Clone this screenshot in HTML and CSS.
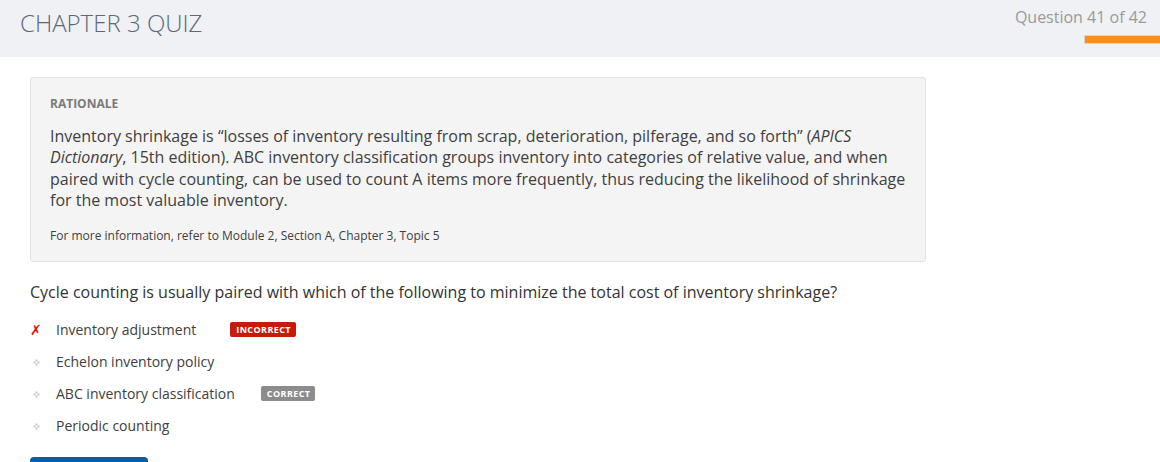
FILE: index.html
```html
<!DOCTYPE html>
<html>
<head>
<meta charset="utf-8">
<link rel="stylesheet" href="styles.css">
</head>
<body>
<header class="topbar">
  <h1 class="title">CHAPTER 3 QUIZ</h1>
  <div class="progress">
    <div class="progress-label">Question 41 of 42</div>
    <div class="progress-bar"></div>
  </div>
</header>
<main class="content">
  <section class="rationale">
    <h2 class="rationale-head">RATIONALE</h2>
    <p class="rationale-text">Inventory shrinkage is “losses of inventory resulting from scrap, deterioration, pilferage, and so forth” (<em>APICS Dictionary</em>, 15th edition). ABC inventory classification groups inventory into categories of relative value, and when paired with cycle counting, can be used to count A items more frequently, thus reducing the likelihood of shrinkage for the most valuable inventory.</p>
    <p class="rationale-ref">For more information, refer to Module 2, Section A, Chapter 3, Topic 5</p>
  </section>
  <p class="question">Cycle counting is usually paired with which of the following to minimize the total cost of inventory shrinkage?</p>
  <ul class="options">
    <li class="option">
      <span class="mark mark-wrong">✗</span>
      <span class="option-text">Inventory adjustment</span>
      <span class="badge badge-incorrect">INCORRECT</span>
    </li>
    <li class="option">
      <span class="mark"><svg width="7" height="7" viewBox="0 0 7 7"><rect x="2.5" y="0.5" width="2" height="2" fill="#c8c8c8"/><rect x="0.5" y="2.5" width="2" height="2" fill="#c8c8c8"/><rect x="4.5" y="2.5" width="2" height="2" fill="#c8c8c8"/><rect x="2.5" y="4.5" width="2" height="2" fill="#c8c8c8"/></svg></span>
      <span class="option-text">Echelon inventory policy</span>
    </li>
    <li class="option">
      <span class="mark"><svg width="7" height="7" viewBox="0 0 7 7"><rect x="2.5" y="0.5" width="2" height="2" fill="#c8c8c8"/><rect x="0.5" y="2.5" width="2" height="2" fill="#c8c8c8"/><rect x="4.5" y="2.5" width="2" height="2" fill="#c8c8c8"/><rect x="2.5" y="4.5" width="2" height="2" fill="#c8c8c8"/></svg></span>
      <span class="option-text">ABC inventory classification</span>
      <span class="badge badge-correct">CORRECT</span>
    </li>
    <li class="option">
      <span class="mark"><svg width="7" height="7" viewBox="0 0 7 7"><rect x="2.5" y="0.5" width="2" height="2" fill="#c8c8c8"/><rect x="0.5" y="2.5" width="2" height="2" fill="#c8c8c8"/><rect x="4.5" y="2.5" width="2" height="2" fill="#c8c8c8"/><rect x="2.5" y="4.5" width="2" height="2" fill="#c8c8c8"/></svg></span>
      <span class="option-text">Periodic counting</span>
    </li>
  </ul>
  <div class="next-btn"></div>
</main>
</body>
</html>
```
FILE: styles.css
```css
* { box-sizing: border-box; }
html, body { margin: 0; padding: 0; }
body {
  font-family: "Open Sans", "Liberation Sans", sans-serif;
  background: #ffffff;
  color: #333;
  overflow: hidden;
  height: 462px;
}
.topbar {
  height: 57px;
  background: #eff1f5;
  display: flex;
  justify-content: space-between;
  align-items: flex-start;
}
.title {
  margin: 0;
  padding: 7px 0 0 20px;
  font-size: 24px;
  font-weight: 300;
  color: #5d6877;
  line-height: 32px;
}
.progress {
  display: flex;
  flex-direction: column;
  align-items: flex-end;
  padding-top: 6px;
}
.progress-label {
  font-size: 16px;
  color: #9a9a9a;
  line-height: 22px;
  padding-right: 13px;
}
.progress-bar {
  margin-top: 7px;
  width: 76px;
  height: 9px;
  background: #f39020;
  border: 1px solid #e0d4c4;
  border-right: none;
}
.content {
  padding: 20px 30px 0 30px;
}
.rationale {
  width: 896px;
  background: #f4f4f4;
  border: 1px solid #e2e2e2;
  border-radius: 3px;
  padding: 18px 19px 17px 19px;
}
.rationale-head {
  margin: 0;
  font-size: 12px;
  font-weight: 700;
  color: #7a7a7a;
  line-height: 16px;
}
.rationale-text {
  margin: 14px 0 0 0;
  font-size: 16px;
  line-height: 21.3px;
  color: #404040;
}
.rationale-ref {
  margin: 17px 0 0 0;
  font-size: 12px;
  line-height: 16px;
  color: #404040;
}
.question {
  margin: 19px 0 0 0;
  font-size: 16px;
  line-height: 22px;
  color: #333;
}
.options {
  list-style: none;
  margin: 11px 0 0 0;
  padding: 0;
}
.option {
  display: flex;
  align-items: center;
  height: 32px;
  font-size: 14px;
  color: #404040;
}
.mark {
  width: 26px;
  display: flex;
  align-items: center;
  padding-left: 3px;
}
.mark-wrong {
  color: #e01010;
  font-size: 14px;
  font-style: italic;
  font-weight: 700;
  padding-left: 0;
  font-family: "DejaVu Sans", sans-serif;
}
.option-text { line-height: 20px; }
.badge {
  display: inline-block;
  font-size: 9px;
  font-weight: 700;
  letter-spacing: 0.4px;
  color: #fff;
  line-height: 15px;
  height: 15px;
  padding: 0 5px 0 6px;
  border-radius: 2px;
  margin-top: -1px;
}
.badge-incorrect { background: #c71a0b; margin-left: 34px; }
.badge-correct { background: #8c8c8c; margin-left: 26px; }
.next-btn {
  margin-top: 15px;
  width: 118px;
  height: 30px;
  border-radius: 4px;
  background: #0b5ea6;
}
```
